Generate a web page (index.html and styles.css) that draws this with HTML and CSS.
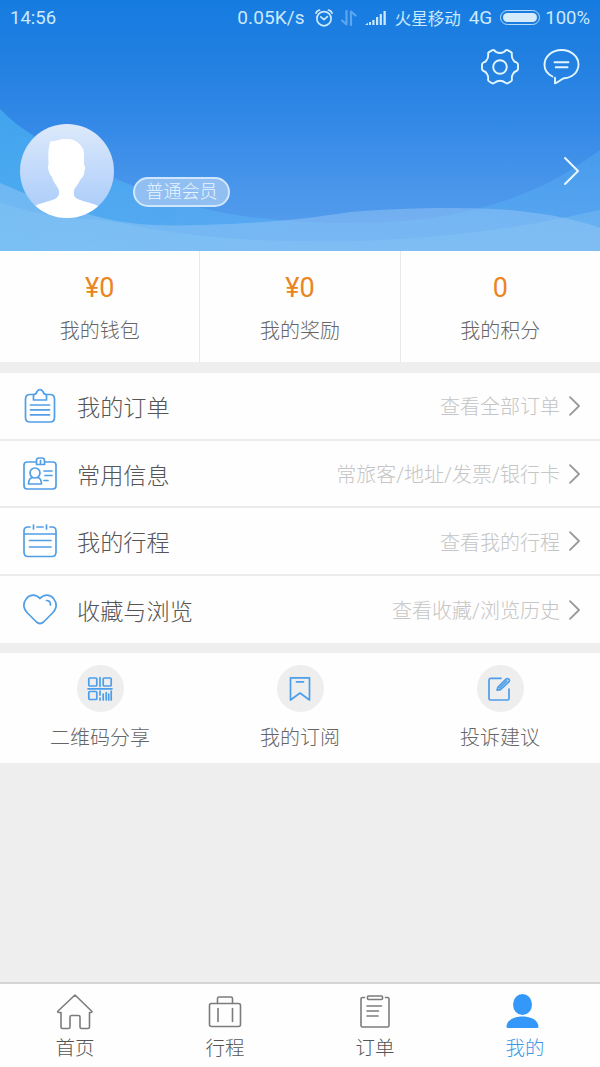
FILE: index.html
```
<!DOCTYPE html>
<html lang="zh-CN">
<head>
<meta charset="utf-8">
<title>我的</title>
<link rel="stylesheet" href="styles.css">
</head>
<body>
<div class="app">
  <header class="hero">
    <svg class="waves" viewBox="0 0 600 251" preserveAspectRatio="none">
      <defs>
        <linearGradient id="wa" x1="0" x2="1" y1="0" y2="0">
          <stop offset="0" stop-color="#4bb4f2" stop-opacity=".65"/>
          <stop offset=".4" stop-color="#58b4f4" stop-opacity=".5"/>
          <stop offset="1" stop-color="#5cb4f5" stop-opacity=".35"/>
        </linearGradient>
      </defs>
      <path fill="url(#wa)" d="M0 109C12 121 20 127 31 134C60 155 90 170 116 179C160 197 200 209 230 214C290 224 370 226 430 218C480 210 500 203 530 191C560 179 580 164 600 150V251H0Z"/>
      <path fill="#a2cdf8" fill-opacity=".42" d="M0 183C30 196 60 207 95 216C130 226 165 226 200 225C260 223 300 220 350 212C410 207 470 207 510 210C550 214 575 219 600 228V251H0Z"/>
      <path fill="#8fcdf6" fill-opacity=".3" d="M0 202C50 220 80 217 116 222C170 234 230 240 290 241C370 243 430 238 490 230C540 224 570 216 600 210V251H0Z"/>
    </svg>
    <div class="status">
      <span class="clock">14:56</span>
      <span class="speed">0.05K/s</span>
      <svg class="alarm" width="20" height="20" viewBox="0 0 20 20"><circle cx="10" cy="10.7" r="7.1"/><path d="M6.8 8.8L10 11.6l3.4-3M2 5.2C2.500 3.500 4 2.300 5.500 2.100M18 5.200C17.500 3.500 16 2.300 14.500 2.100"/></svg>
      <svg class="updown" width="16" height="16" viewBox="0 0 16 16"><path d="M5.500 1v13.500L1 10.500M10 15V1.500l4.500 4"/></svg>
      <svg class="signal" width="22" height="16" viewBox="0 0 22 16"><path d="M0 15h3v-2.200zM4 12h2v3H4zM7.300 10h2.200v5H7.300zM11 7h2.200v8H11zM14.700 4h2.200v11h-2.200zM18.500 1h2.300v14h-2.300z"/></svg>
      <span class="carrier">火星移动</span>
      <span class="net">4G</span>
      <span class="battery"><i></i></span>
      <span class="percent">100%</span>
    </div>
    <div class="actions">
      <svg width="40" height="40" viewBox="0 0 40 40"><circle cx="20" cy="20" r="6.800"/><path d="M14.300 3.300Q16 6 20 6Q24 6 25.700 3.300Q26.600 2.600 28 3.400L31 5.100Q32.200 6 31.800 7.200Q31.600 11 33.300 13Q34.300 15 36.200 15.300Q38 16 38 17.500V22Q37.800 23.500 36.300 24Q34 24.700 33 27Q31.500 29 31.900 31.500Q32.300 33.400 31 34.300L28 36.200Q26.600 36.900 25.400 35.700Q23 33.700 20 33.700Q17 33.700 14.600 35.700Q13.400 36.900 12 36.200L9 34.300Q7.700 33.400 8.100 31.500Q8.500 29 7 27Q6 24.700 3.700 24Q2.200 23.500 2 22V17.500Q2 16 3.800 15.300Q5.700 15 6.700 13Q8.400 11 8.200 7.200Q7.800 6 9 5.100L12 3.400Q13.400 2.600 14.300 3.300Z"/></svg>
      <svg width="40" height="40" viewBox="0 0 40 40"><path d="M11.500 29.500C6.500 27 3.500 23 3.500 18C3.500 9.500 11 3 20.500 3S37.500 9.500 37.500 17.500S31 30.500 23 31.300C21 31.600 17.500 35 14 36.300V30.700"/><path d="M13.500 15.200H27.500M14.700 20.300H26.500"/></svg>
    </div>
    <div class="profile">
      <svg class="avatar" width="94" height="94" viewBox="0 0 94 94">
        <defs>
          <linearGradient id="av" x1="0" x2="0" y1="0" y2="1"><stop offset="0" stop-color="#dde9fb"/><stop offset="1" stop-color="#a6cafa"/></linearGradient>
          <clipPath id="round"><circle cx="47" cy="47" r="47"/></clipPath>
        </defs>
        <g clip-path="url(#round)">
          <rect width="94" height="94" fill="url(#av)"/>
          <path fill="#fff" d="M30.500 17C35 18 38 15 46 15C54 14 63 20 64 29L64 41Q66 42 64.500 47Q64 53 60 56C58 62 54 63 54 68V71C55 77 69 77 78 82V94H15V82C24 77 38 77 39 70V67C38 62 34 60 32 53Q28 49 28 42Q29 40 28.500 38Q27.500 26 30.500 17Z"/>
        </g>
      </svg>
      <span class="level">普通会员</span>
      <svg class="enter" width="20" height="32" viewBox="0 0 20 32"><path d="M3 3L16 16L3 29"/></svg>
    </div>
  </header>

  <section class="stats">
    <div class="stat"><b>¥0</b><span>我的钱包</span></div>
    <div class="stat"><b>¥0</b><span>我的奖励</span></div>
    <div class="stat"><b>0</b><span>我的积分</span></div>
  </section>

  <section class="menu">
    <div class="row">
      <svg class="icon" width="40" height="40" viewBox="0 0 40 40"><path d="M13.500 8.500H10Q5.500 8.500 5.500 13V31.500Q5.500 36 10 36H30Q34.500 36 34.500 31.500V13Q34.500 8.500 30 8.500H26.500"/><path d="M13.500 14V8.500Q16 8.500 16.500 6.500Q18 3.500 20 3.500T23.500 6.500Q24 8.500 26.500 8.500V14ZM10.500 19H29.500M10.500 23.800H29.500M10.500 28.800H29.500"/></svg>
      <span class="name">我的订单</span><span class="hint">查看全部订单</span>
      <svg class="arrow" width="12" height="20" viewBox="0 0 12 20"><path d="M1 1.200L10 10L1 18.800"/></svg>
    </div>
    <div class="row">
      <svg class="icon" width="40" height="40" viewBox="0 0 40 40"><path d="M16 8H7Q4 8 4 11V31.500Q4 35 7 35H33Q36 35 36 31.500V11Q36 8 33 8H25"/><path d="M16.500 10.500V6.500Q16.500 4 19 4H22Q24.500 4 24.500 6.500V10.500ZM20.500 6.500V9M24 17H32M25 21.500H32M24 26.500H28"/><circle cx="15" cy="19" r="5"/><path d="M12 23.500Q8.500 25 8.500 30H21.500Q21.500 25 18 23.500"/></svg>
      <span class="name">常用信息</span><span class="hint">常旅客/地址/发票/银行卡</span>
      <svg class="arrow" width="12" height="20" viewBox="0 0 12 20"><path d="M1 1.200L10 10L1 18.800"/></svg>
    </div>
    <div class="row">
      <svg class="icon" width="40" height="40" viewBox="0 0 40 40"><path d="M10 6H8Q4 6 4 10V31Q4 35.500 8 35.500H32Q36 35.500 36 31V10Q36 6 32 6H30M17 6H23M4 13H36M13.500 4V8M26.500 4V8M9.500 19.500H31M9.500 26H31"/></svg>
      <span class="name">我的行程</span><span class="hint">查看我的行程</span>
      <svg class="arrow" width="12" height="20" viewBox="0 0 12 20"><path d="M1 1.200L10 10L1 18.800"/></svg>
    </div>
    <div class="row">
      <svg class="icon" width="40" height="40" viewBox="0 0 40 40"><path d="M20 8.500C16 4 10 4 6.500 8.500C2.500 13.500 3.500 19 8 23.500L16.500 32Q20 35 23.500 32L32 23.500C36.500 19 37.500 13.500 33.500 8.500C30 4 24 4 20 8.500ZM26.500 10.500Q30.500 10.500 30.500 15"/></svg>
      <span class="name">收藏与浏览</span><span class="hint">查看收藏/浏览历史</span>
      <svg class="arrow" width="12" height="20" viewBox="0 0 12 20"><path d="M1 1.200L10 10L1 18.800"/></svg>
    </div>
  </section>

  <section class="tools">
    <div class="tool">
      <span class="disc"><svg width="26" height="26" viewBox="0 0 26 26"><rect x="1.800" y="2" width="8" height="8" rx="1"/><rect x="16.200" y="2" width="8" height="8" rx="1"/><rect x="1.800" y="15.500" width="8" height="8" rx="1"/><path d="M13 1.500V10.500M1 12.800H25M13 15V19M16.200 18V24M19.200 16.500V24M21.700 18V24M24.200 15V24M13 22V24"/></svg></span>
      <span>二维码分享</span>
    </div>
    <div class="tool">
      <span class="disc"><svg width="26" height="26" viewBox="0 0 26 26"><path d="M3.500 1.800H22.500V24L13 17L3.500 24ZM9.500 5.800H16.500"/></svg></span>
      <span>我的订阅</span>
    </div>
    <div class="tool">
      <span class="disc"><svg width="26" height="26" viewBox="0 0 26 26"><path d="M14 2.300H3.500Q2 2.300 2 4V22.500Q2 24 3.500 24H20.500Q22 24 22 22.500V13"/><path d="M10 14.200L11 11L19 3.200Q20.500 2 21.800 3.200Q23 4.500 21.800 5.800L13.500 13.700ZM12.500 12L19.800 5"/></svg></span>
      <span>投诉建议</span>
    </div>
  </section>

  <nav class="tabs">
    <div class="tab"><svg width="40" height="38" viewBox="0 0 40 38"><path d="M20 2L37 18.500Q37 19.500 36 19.500H34.500V34Q34.500 35.500 33 35.500H26.500Q25 35.500 25 34V24Q25 22.500 23.500 22.500H16.500Q15 22.500 15 24V34Q15 35.500 13.500 35.500H7.500Q6 35.500 6 34V19.500H4Q2 19.500 3 18Z"/></svg><span>首页</span></div>
    <div class="tab"><svg width="40" height="38" viewBox="0 0 40 38"><rect x="4.500" y="10.500" width="31" height="23" rx="2"/><path d="M12.500 10.500V5.500Q12.500 4 14 4H26Q27.500 4 27.500 5.500V10.500M13 15.500V28.500M27.500 15.500V28.500"/></svg><span>行程</span></div>
    <div class="tab"><svg width="40" height="38" viewBox="0 0 40 38"><path d="M9.500 4.500H7.500Q6 4.500 6 6V32.500Q6 34 7.500 34H32.500Q34 34 34 32.500V6Q34 4.500 32.500 4.500H30.500M12 13H26.500M12 18H23.500M12 23H23"/><rect x="12.500" y="3" width="15" height="3.500" rx="1"/></svg><span>订单</span></div>
    <div class="tab active"><svg width="40" height="38" viewBox="0 0 40 38"><ellipse cx="17.500" cy="11.500" rx="9.500" ry="10.500"/><path d="M1.500 33.500C2 27 9 23.500 17.500 23.500S33 27 33.500 33.500Q33.500 35 32 35H3Q1.500 35 1.500 33.500Z"/></svg><span>我的</span></div>
  </nav>
</div>
</body>
</html>
```
FILE: styles.css
```
* { box-sizing: border-box; }
body {
  margin: 0;
  font-family: Roboto, "Noto Sans CJK SC", sans-serif;
  font-weight: 300;
  color: #555;
}
svg { display: block; flex: none; fill: none; stroke-linecap: round; stroke-linejoin: round; }
span { white-space: nowrap; }
.app { display: flex; flex-direction: column; width: 600px; height: 1067px; background: #eee; }

.hero {
  position: relative;
  flex: none;
  height: 251px;
  background: linear-gradient(#167be0 0%, #2280e1 25%, #3489e7 50%, #4996eb 75%, #5a9fee 100%);
}
.waves { position: absolute; inset: 0; width: 600px; height: 251px; }

.status {
  position: relative;
  display: flex;
  align-items: center;
  height: 35px;
  padding: 0 10px;
  color: #cbe9fc;
  font-size: 19px;
  font-weight: 400;
}
.clock { margin-right: auto; font-size: 18.500px; }
.speed { margin-right: 9px; letter-spacing: .1px; }
.alarm { margin-right: 7px; stroke: #cbe9fc; stroke-width: 1.700; }
.updown { margin-right: 8px; stroke: #5ba6ee; stroke-width: 2.200; }
.signal { margin-right: 8px; fill: #cbe9fc; }
.carrier { margin-right: 8px; font-size: 16.500px; }
.net { margin-right: 8px; }
.battery { width: 40px; height: 15px; margin-right: 5px; padding: 2px; border: 1px solid #b7dcf8; border-radius: 8px; }
.battery i { display: block; height: 9px; border-radius: 5px; background: #d4ebfc; }
.percent { font-size: 18.500px; }

.actions { position: relative; display: flex; justify-content: flex-end; gap: 21px; padding: 12px 19px 0 0; }
.actions svg { stroke: #e2f6ff; stroke-width: 1.900; }

.profile { position: relative; display: flex; align-items: center; height: 94px; margin: 37px 18px 0 20px; }
.level {
  margin: 41px auto 0 19px;
  width: 97px;
  height: 30px;
  border: 2px solid #d0e7fb;
  border-radius: 15px;
  background: #91bff2;
  color: #e9f5ff;
  font-size: 18px;
  line-height: 26px;
  text-align: center;
}
.enter { stroke: #e8f7ff; stroke-width: 2; }

.stats { display: flex; flex: none; height: 111px; background: #fefefe; }
.stat { display: flex; flex: 1; flex-direction: column; align-items: center; padding-top: 20px; font-size: 20px; color: #666; }
.stat + .stat { border-left: 1px solid #e9e9e9; }
.stat b { color: #ea8523; font-size: 27px; font-weight: 400; line-height: 34px; }
.stat span { margin-top: 12px; line-height: 28px; }

.menu { flex: none; margin-top: 11px; background: #fefefe; }
.row { display: flex; align-items: center; height: 67.700px; padding: 0 19px 0 20px; border-bottom: 2px solid #ececec; }
.row:last-child { border-bottom: 0; height: 67px; }
.icon { stroke: #519fe6; stroke-width: 1.700; }
.name { margin-left: 17px; font-size: 23.200px; }
.hint { margin: 0 9px 0 auto; font-size: 20px; color: #c5c5c5; }
.arrow { stroke: #999; stroke-width: 1.800; }

.tools { display: flex; flex: none; height: 110px; margin-top: 10px; background: #fefefe; }
.tool { display: flex; flex: 1; flex-direction: column; align-items: center; padding-top: 12px; font-size: 20px; line-height: 28px; color: #666; }
.disc { display: grid; place-items: center; width: 47px; height: 47px; margin-bottom: 12px; border-radius: 50%; background: #eee; }
.disc svg { stroke: #4d9eea; stroke-width: 1.700; }

.tabs { display: flex; flex: none; height: 85px; margin-top: auto; border-top: 2px solid #d5d5d5; background: #fefefe; }
.tab { display: flex; flex: 1; flex-direction: column; align-items: center; padding-top: 9px; font-size: 19.500px; line-height: 28px; }
.tab svg { margin-bottom: 4px; stroke: #7c7c7c; stroke-width: 1.600; }
.tab.active { color: #3d98e8; }
.tab.active svg { fill: #3398fa; stroke: none; }
```
